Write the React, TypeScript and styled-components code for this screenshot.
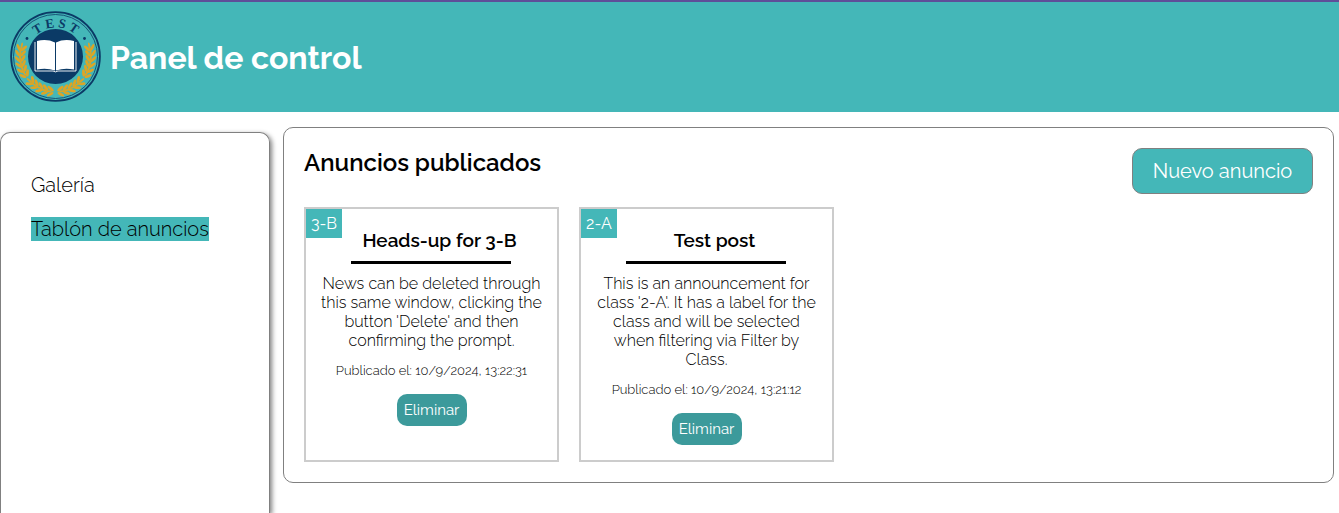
import React from "react";
import styled, { createGlobalStyle } from "styled-components";

const teal = "#44b7b8";
const navy = "#0b3a66";
const gold = "#dca526";

const GlobalStyle = createGlobalStyle`
  *, *::before, *::after { box-sizing: border-box; }
  body {
    margin: 0;
    background: #fff;
    color: #000;
    font-family: Raleway, "Open Sans", sans-serif;
    font-weight: 300;
  }
  h1, h2, h3, p, ul { margin: 0; padding: 0; }
  button { font-family: inherit; cursor: pointer; }
`;

const Page = styled.div`
  display: flex;
  flex-direction: column;
  min-height: 100vh;
`;

const Header = styled.header`
  display: flex;
  align-items: center;
  gap: 8px;
  height: 112px;
  padding: 0 10px;
  border-top: 2px solid #5f4e99;
  background: ${teal};
`;

const HeaderTitle = styled.h1`
  color: #fff;
  font-size: 32px;
  line-height: 38px;
  font-weight: 700;
  padding-top: 2px;
`;

const Body = styled.div`
  display: flex;
  flex: 1;
  gap: 13px;
  padding: 15px 5px 0 0;
`;

const Sidebar = styled.nav`
  flex: 0 0 270px;
  margin-top: 5px;
  padding: 40px 30px;
  border: 1px solid #808080;
  border-bottom: 0;
  border-radius: 10px 10px 0 0;
  box-shadow: 2px 2px 5px #808080;
`;

const NavList = styled.ul`
  display: flex;
  flex-direction: column;
  align-items: flex-start;
  gap: 20px;
  list-style: none;
`;

const NavLink = styled.a<{ $active?: boolean }>`
  display: block;
  color: #000;
  font-size: 20px;
  line-height: 24px;
  white-space: nowrap;
  text-decoration: none;
  background: ${(p) => (p.$active ? teal : "transparent")};
`;

const Panel = styled.main`
  flex: 1;
  min-width: 0;
  align-self: flex-start;
  padding: 20px;
  border: 1px solid #808080;
  border-radius: 10px;
`;

const PanelHead = styled.div`
  display: flex;
  justify-content: space-between;
  align-items: flex-start;
  margin-bottom: 13px;
`;

const PanelTitle = styled.h2`
  font-size: 24px;
  line-height: 30px;
  font-weight: 600;
`;

const NewButton = styled.button`
  width: 181px;
  height: 46px;
  padding: 0;
  border: 1px solid #808080;
  border-radius: 10px;
  background: ${teal};
  color: #fff;
  font-size: 20px;
  font-weight: 400;
`;

const Cards = styled.div`
  display: flex;
  flex-wrap: wrap;
  gap: 20px;
`;

const Card = styled.article`
  display: flex;
  flex-direction: column;
  width: 255px;
  min-height: 255px;
  padding-bottom: 15px;
  border: 2px solid #ccc;
  text-align: center;
`;

const CardHead = styled.div`
  display: flex;
  align-items: flex-start;
  padding-right: 20px;
`;

const Tag = styled.span`
  width: 36px;
  padding: 5px 0;
  background: ${teal};
  color: #fff;
  font-size: 16px;
  line-height: 19px;
  font-weight: 400;
`;

const CardTitle = styled.h3`
  flex: 1;
  padding-top: 20px;
  font-size: 19px;
  line-height: 22px;
  font-weight: 600;
`;

const Rule = styled.hr`
  width: 160px;
  height: 3px;
  margin: 10px 46px 10px 45px;
  border: 0;
  background: #000;
`;

const CardText = styled.p`
  font-size: 16px;
  line-height: 19px;
`;

const CardDate = styled.p`
  margin: 13px 0 16px;
  font-size: 13px;
  line-height: 15px;
`;

const DeleteButton = styled.button`
  align-self: center;
  width: 70px;
  height: 32px;
  padding: 0;
  border: 0;
  border-radius: 10px;
  background: #3c9a9b;
  color: #fff;
  font-size: 15px;
  font-weight: 400;
`;

const leaves = [5, 14, 23, 32, 41, 56, 65, 74, 83, 92, 101];

function Branch() {
  return (
    <g>
      {leaves.map((a) => (
        <g key={a} transform={`rotate(${a} 46 46)`} fill={gold}>
          <ellipse cx="44" cy="78.500" rx="3.800" ry="1.500" transform="rotate(38 44 78.5)" />
          <ellipse cx="44" cy="84" rx="3.600" ry="1.400" transform="rotate(-34 44 84)" />
          <ellipse cx="42" cy="81.200" rx="3.400" ry="1" />
        </g>
      ))}
    </g>
  );
}

function Logo() {
  return (
    <svg width="92" height="92" viewBox="0 0 92 92" role="img" aria-label="Test">
      <defs>
        <path id="arc" d="M16.500 46A29.500 29.500 0 0 1 75.500 46" />
      </defs>
      <circle cx="45.500" cy="45.500" r="44.400" fill="none" stroke={navy} strokeWidth="1.800" />
      <circle cx="45.500" cy="45.500" r="42" fill="none" stroke={navy} strokeWidth="0.800" />
      <circle cx="45.500" cy="45.500" r="27.500" fill={navy} />
      <text fill={navy} fontFamily="Liberation Serif, serif" fontWeight="700" fontSize="13" letterSpacing="3" textAnchor="middle">
        <textPath href="#arc" startOffset="51%">TEST</textPath>
      </text>
      <circle cx="17" cy="27.500" r="1.400" fill={navy} />
      <circle cx="74.500" cy="27.500" r="1.400" fill={navy} />
      <g transform="translate(-0.5 -0.5)">
        <Branch />
      </g>
      <g transform="translate(91.5 -0.5) scale(-1 1)">
        <Branch />
      </g>
      <path d="M25 31v29h18q2.500 1.800 5 0h18V31" fill="none" stroke="#fff" strokeWidth="0.900" />
      <path d="M27 30q10-2.500 18 1.500v28q-8.500-3-18-1z" fill="#fff" />
      <path d="M64 30q-10-2.500-18 1.500v28q8.500-3 18-1z" fill="#fff" />
    </svg>
  );
}

const posts = [
  {
    tag: "3-B",
    title: "Heads-up for 3-B",
    lines: ["News can be deleted through", "this same window, clicking the", "button 'Delete' and then", "confirming the prompt."],
    date: "10/9/2024, 13:22:31",
  },
  {
    tag: "2-A",
    title: "Test post",
    lines: ["This is an announcement for", "class '2-A'. It has a label for the", "class and will be selected", "when filtering via Filter by", "Class."],
    date: "10/9/2024, 13:21:12",
  },
];

export default function App() {
  return (
    <Page>
      <GlobalStyle />
      <Header>
        <Logo />
        <HeaderTitle>Panel de control</HeaderTitle>
      </Header>
      <Body>
        <Sidebar>
          <NavList>
            <li><NavLink href="#galeria">Galería</NavLink></li>
            <li><NavLink href="#anuncios" $active aria-current="page">Tablón de anuncios</NavLink></li>
          </NavList>
        </Sidebar>
        <Panel>
          <PanelHead>
            <PanelTitle>Anuncios publicados</PanelTitle>
            <NewButton type="button">Nuevo anuncio</NewButton>
          </PanelHead>
          <Cards>
            {posts.map((post) => (
              <Card key={post.tag}>
                <CardHead>
                  <Tag>{post.tag}</Tag>
                  <CardTitle>{post.title}</CardTitle>
                </CardHead>
                <Rule />
                <CardText>
                  {post.lines.map((line, i) => (
                    <React.Fragment key={line}>
                      {i > 0 && <br />}
                      {line}
                    </React.Fragment>
                  ))}
                </CardText>
                <CardDate>Publicado el: {post.date}</CardDate>
                <DeleteButton type="button">Eliminar</DeleteButton>
              </Card>
            ))}
          </Cards>
        </Panel>
      </Body>
    </Page>
  );
}
